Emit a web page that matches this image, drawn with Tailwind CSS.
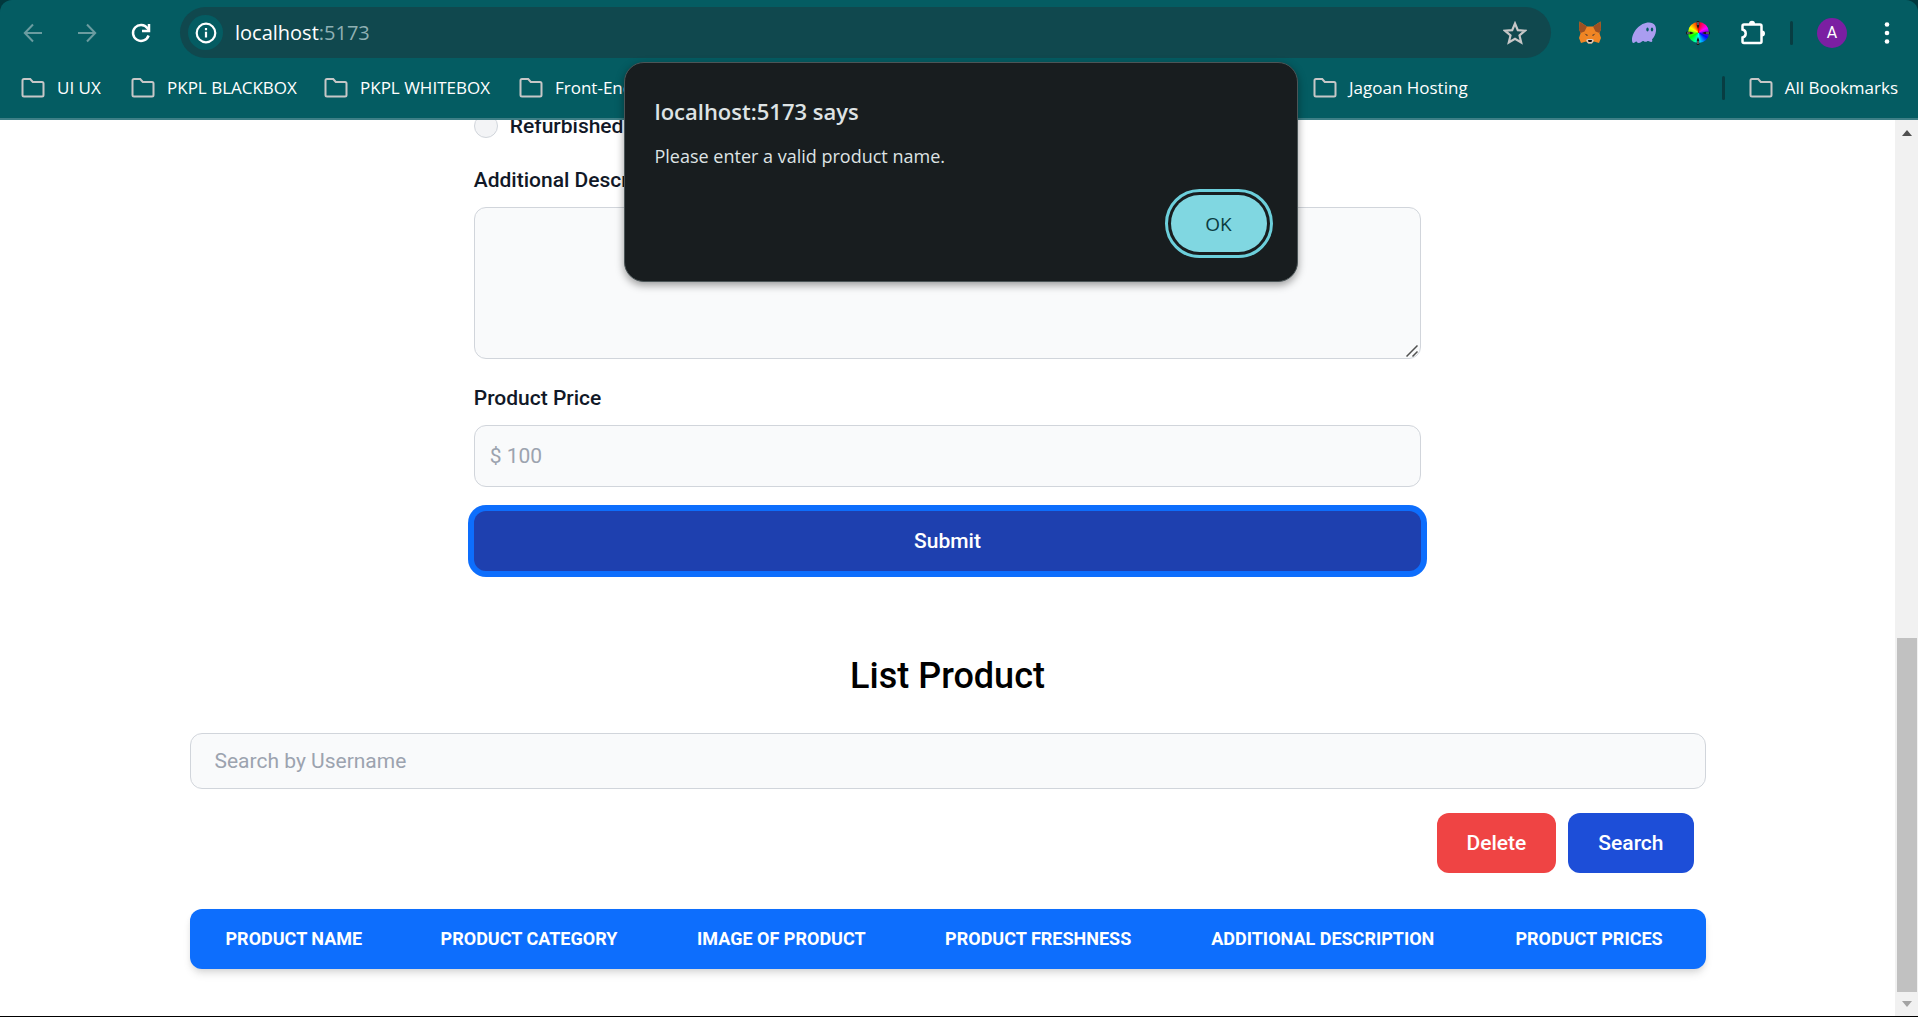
<!DOCTYPE html>
<html lang="en">
<head>
<meta charset="utf-8">
<meta name="viewport" content="width=device-width, initial-scale=1">
<title>localhost:5173</title>
<script src="https://cdn.jsdelivr.net/npm/@tailwindcss/browser@4"></script>
</head>
<body class="relative flex h-screen flex-col overflow-hidden bg-white font-['Roboto',sans-serif] text-[21px] leading-[30px] text-[#111827]">

<svg class="hidden">
  <symbol id="folder" viewBox="0 0 24 20"><path d="M1.500 16.500v-14Q1.500 1 3 1h6.200l2.600 3H21q1.500 0 1.500 1.500v11.500q0 1.500-1.500 1.500H3q-1.500 0-1.500-1.500z" fill="none" stroke="#c7c7c7" stroke-width="2"/></symbol>
</svg>

<!-- Browser toolbar -->
<div class="shrink-0 bg-[#02383d]">
<header class="h-[120px] rounded-t-xl border-b-2 border-[#3e7f86] bg-[#045c62] font-['Open_Sans','Noto_Sans',sans-serif] text-white">
  <div class="flex h-[65px] items-center">
    <div class="flex w-[180px] shrink-0 items-center gap-[30px] pl-[21px]">
      <button aria-label="Back" class="size-6"><svg viewBox="0 0 24 24" class="size-6" fill="none" stroke="#6b9ca0" stroke-width="2"><path d="M21 12H4M12 3.500L3.800 12l8.200 8.500"/></svg></button>
      <button aria-label="Forward" class="size-6"><svg viewBox="0 0 24 24" class="size-6" fill="none" stroke="#6b9ca0" stroke-width="2"><path d="M3 12h17M12 3.500l8.200 8.500-8.200 8.500"/></svg></button>
      <button aria-label="Reload" class="size-6"><svg viewBox="0 0 24 24" class="size-6" fill="none" stroke="#fff" stroke-width="2.500"><path d="M19.600 14.500A8 8 0 1 1 18.500 7.200L20 9"/><path d="M20 3v7h-7"/></svg></button>
    </div>
    <div class="flex h-[51px] flex-1 items-center rounded-full bg-[#10484e] pl-2 pr-6">
      <button aria-label="View site information" class="flex size-[35px] items-center justify-center rounded-full bg-[#045c62]"><svg viewBox="0 0 24 24" class="size-6" fill="none" stroke="#fff" stroke-width="2.200"><circle cx="12" cy="12" r="9.300"/><path d="M12 10.800v5.700M12 7v2.200"/></svg></button>
      <div class="ml-3 flex-1 text-[20px]">localhost<span class="text-[#8fb0b3]">:5173</span></div>
      <button aria-label="Bookmark this tab" class="size-6"><svg viewBox="0 0 24 24" class="size-6" fill="none" stroke="#c7c7c7" stroke-width="2.200"><path d="M12 2.500l2.800 6.600 7.200.6-5.500 4.700 1.700 7-6.200-3.700-6.200 3.700 1.700-7L2 9.700l7.200-.6z"/></svg></button>
    </div>
    <div class="flex w-[367px] shrink-0 items-center pl-[27px]">
      <button aria-label="MetaMask" class="size-6"><svg viewBox="0 0 24 24" class="size-6">
        <path d="M1.500 0.500l7.500 5h6l7.500-5 .5 7-1.500 5 1.500 4.500-2 5-5-1.500-2.500 2h-3L8 20.500 3 22l-2-5 1.500-4.500L1 7.500z" fill="#f08524"/>
        <path d="M1.500 0.500l7.500 5-2.500 5L2.500 12 1 8zM22.500 0.500l-7.500 5 2.500 5 4 1.500L23 8z" fill="#9c5023"/>
        <path d="M6.500 12.500l3.500 1.500-1 1zM17.500 12.500L14 14l1 1z" fill="#4a3a33"/><path d="M8 19l2-1h4l2 1-2 3.500h-4z" fill="#d8cbc0"/><path d="M10 19h4l-.5 2h-3z" fill="#111"/></svg></button>
      <button aria-label="Phantom" class="ml-[29px] size-[26px]"><svg viewBox="0 0 26 26" class="size-[26px]">
        <path d="M1 20C1 12 9 2.500 18 2.500c5.500 0 7.500 4 7 8.500-.4 3.500-2 6.500-4 8.500.6 1.500.3 2.500-.8 2.500-1.500 0-2-1-3-1s-1.500.8-2.700.8-1.700-.8-2.500-.8-2.200 2-4.500 2c-1.500 0-1.300-1.500-2.200-1.500S3.500 23 2.500 23C1.300 23 1 21.500 1 20z" fill="#aa9df0"/><ellipse cx="16.500" cy="9.500" rx="1.200" ry="1.900" fill="#045c62"/><ellipse cx="21" cy="9.500" rx="1.200" ry="1.900" fill="#045c62"/></svg></button>
      <button aria-label="ColorZilla" class="relative ml-[29px] flex size-6 items-center justify-center"><span class="size-[21px] rounded-full bg-[conic-gradient(red,magenta,blue,cyan,lime,yellow,red)]"></span>
        <svg viewBox="0 0 24 24" class="absolute inset-0 size-6"><g fill="#1a1a1a"><path d="M10.800 0h2.400v5L12 8l-1.200-3zM10.800 24h2.400v-5L12 16l-1.200 3zM0 10.800v2.400h5L8 12l-3-1.200zM24 10.800v2.400h-5L16 12l3-1.200z"/></g><path d="M12 1v3M12 20v3M1 12h3M20 12h3" stroke="#b5b5b5" stroke-width=".8"/></svg></button>
      <button aria-label="Extensions" class="ml-[30px] size-[26px]"><svg viewBox="0 0 26 26" class="size-[26px]">
        <path d="M4 4.500h16q1.500 0 1.500 1.500v15.500q0 1.500-1.500 1.500H4q-1.500 0-1.500-1.500v-4q3.200-.8 3.200-4t-3.200-4V6Q2.500 4.500 4 4.500z" fill="none" stroke="#fff" stroke-width="2.500"/><path d="M9 4a3 3.300 0 0 1 6 0zM22 10.500a3 3 0 0 1 0 6z" fill="#fff"/></svg></button>
      <span class="ml-6 h-6 w-[3px] rounded bg-[#083d42]"></span>
      <button aria-label="Profile" class="ml-6 flex size-[30px] items-center justify-center rounded-full bg-[#7b1fa2] font-['Roboto'] text-base">A</button>
      <button aria-label="Menu" class="ml-7 size-6"><svg viewBox="0 0 24 24" class="size-6" fill="#fff"><circle cx="12" cy="3.500" r="2.300"/><circle cx="12" cy="12" r="2.300"/><circle cx="12" cy="20.500" r="2.300"/></svg></button>
    </div>
  </div>
  <nav aria-label="Bookmarks" class="flex h-[46px] items-center whitespace-nowrap pl-[21px] pr-5 text-[17px]">
    <a href="#" class="flex w-[110px] items-center gap-3"><svg class="h-5 w-6"><use href="#folder"/></svg>UI UX</a>
    <a href="#" class="flex w-[193px] items-center gap-3"><svg class="h-5 w-6"><use href="#folder"/></svg>PKPL BLACKBOX</a>
    <a href="#" class="flex w-[195px] items-center gap-3"><svg class="h-5 w-6"><use href="#folder"/></svg>PKPL WHITEBOX</a>
    <a href="#" class="flex w-[794px] items-center gap-3"><svg class="h-5 w-6"><use href="#folder"/></svg>Front-End</a>
    <a href="#" class="flex items-center gap-3"><svg class="h-5 w-6"><use href="#folder"/></svg>Jagoan Hosting</a>
    <span class="ml-auto h-6 w-[3px] rounded bg-[#083d42]"></span>
    <a href="#" class="ml-6 flex items-center gap-3"><svg class="h-5 w-6"><use href="#folder"/></svg>All Bookmarks</a>
  </nav>
</header>
</div>

<div class="flex min-h-0 flex-1 border-b border-black">
  <main class="flex-1 overflow-hidden">
    <!-- Product form, scrolled part way past its radio group -->
    <form class="mx-auto -mt-[9px] flex w-1/2 flex-col gap-6 font-medium">
      <div class="flex items-center gap-3">
        <input type="radio" id="refurbished" name="freshness" class="size-6 appearance-none rounded-full border border-[#d1d5db] bg-[#f3f4f6]">
        <label for="refurbished">Refurbished</label>
      </div>
      <div class="relative flex flex-col gap-3">
        <label for="description">Additional Description</label>
        <textarea id="description" class="h-[152px] resize-none rounded-xl border border-[#d1d5db] bg-[#f9fafb] p-4 font-normal"></textarea>
        <svg viewBox="0 0 12 12" class="pointer-events-none absolute right-[3px] bottom-[2px] size-3" fill="none" stroke="#505050" stroke-width="1.500"><path d="M.5 11.500l11-11M6.500 11.500l5-5"/></svg>
      </div>
      <div class="flex flex-col gap-3">
        <label for="price">Product Price</label>
        <input id="price" type="text" placeholder="$ 100" class="h-[62px] rounded-xl border border-[#d1d5db] bg-[#f9fafb] px-[15px] font-normal placeholder:text-[#9ca3af]">
      </div>
      <button type="button" class="h-[60px] rounded-xl bg-[#1e40af] text-white ring-6 ring-[#0d6efd]">Submit</button>
    </form>

    <section class="mx-auto mt-[81px] w-4/5">
      <h2 class="text-center text-4xl leading-[48px] font-medium text-black">List Product</h2>
      <input type="text" aria-label="Search by Username" placeholder="Search by Username" class="mt-[33px] h-14 w-full rounded-xl border border-[#d1d5db] bg-[#f9fafb] px-6 placeholder:text-[#9ca3af]">
      <div class="mt-6 flex justify-end gap-3 pr-3 font-medium text-white">
        <button class="h-[60px] rounded-xl bg-[#ef4444] px-[30px]">Delete</button>
        <button class="h-[60px] rounded-xl bg-[#1d4ed8] px-[30px]">Search</button>
      </div>
      <div class="mt-9 overflow-hidden rounded-xl bg-[#0d6efd] shadow-[0_6px_9px_-1px_rgba(0,0,0,0.1),0_3px_6px_-2px_rgba(0,0,0,0.1)]">
        <table class="w-full text-left text-[18px] leading-6 text-white uppercase">
          <thead><tr class="h-[60px] whitespace-nowrap">
            <th scope="col" class="px-9">Product Name</th>
            <th scope="col" class="px-9">Product Category</th>
            <th scope="col" class="px-9">Image of Product</th>
            <th scope="col" class="px-9">Product Freshness</th>
            <th scope="col" class="px-9">Additional Description</th>
            <th scope="col" class="px-9">Product Prices</th>
          </tr></thead>
        </table>
      </div>
    </section>
  </main>
  <!-- Page scrollbar -->
  <div class="flex w-[23px] shrink-0 flex-col items-center bg-[#f1f1f1]">
    <svg viewBox="0 0 10 6" class="mt-[10px] h-[6px] w-[10px]" fill="#505050"><path d="M0 6l5-6 5 6z"/></svg>
    <div class="mt-auto h-[354px] w-5 bg-[#c1c1c1]"></div>
    <svg viewBox="0 0 10 6" class="mt-[9px] mb-[9px] h-[6px] w-[10px]" fill="#a3a3a3"><path d="M0 0l5 6 5-6z"/></svg>
  </div>
</div>

<!-- Alert -->
<div class="pointer-events-none absolute inset-x-0 top-[62px] flex justify-center pl-[3px]">
<div role="alertdialog" aria-labelledby="alert-title" class="pointer-events-auto flex h-[220px] w-[674px] flex-col rounded-[20px] border border-[#4b5557] bg-[#181d1f] px-[30px] pt-[33px] pb-[29px] font-['Open_Sans','Noto_Sans',sans-serif] text-[#dee3e4] shadow-[0_3px_8px_rgba(0,0,0,0.4)]">
  <h1 id="alert-title" class="text-[22px] leading-[30px] font-semibold">localhost:5173 says</h1>
  <p class="mt-[15px] text-[18px] leading-[30px]">Please enter a valid product name.</p>
  <button class="mt-auto h-[57px] w-24 self-end rounded-full bg-[#80d7e1] text-[19px] font-medium text-[#0b3b40] outline-[3px] outline-offset-[3px] outline-[#6ccfdb]">OK</button>
</div>
</div>
</body>
</html>
